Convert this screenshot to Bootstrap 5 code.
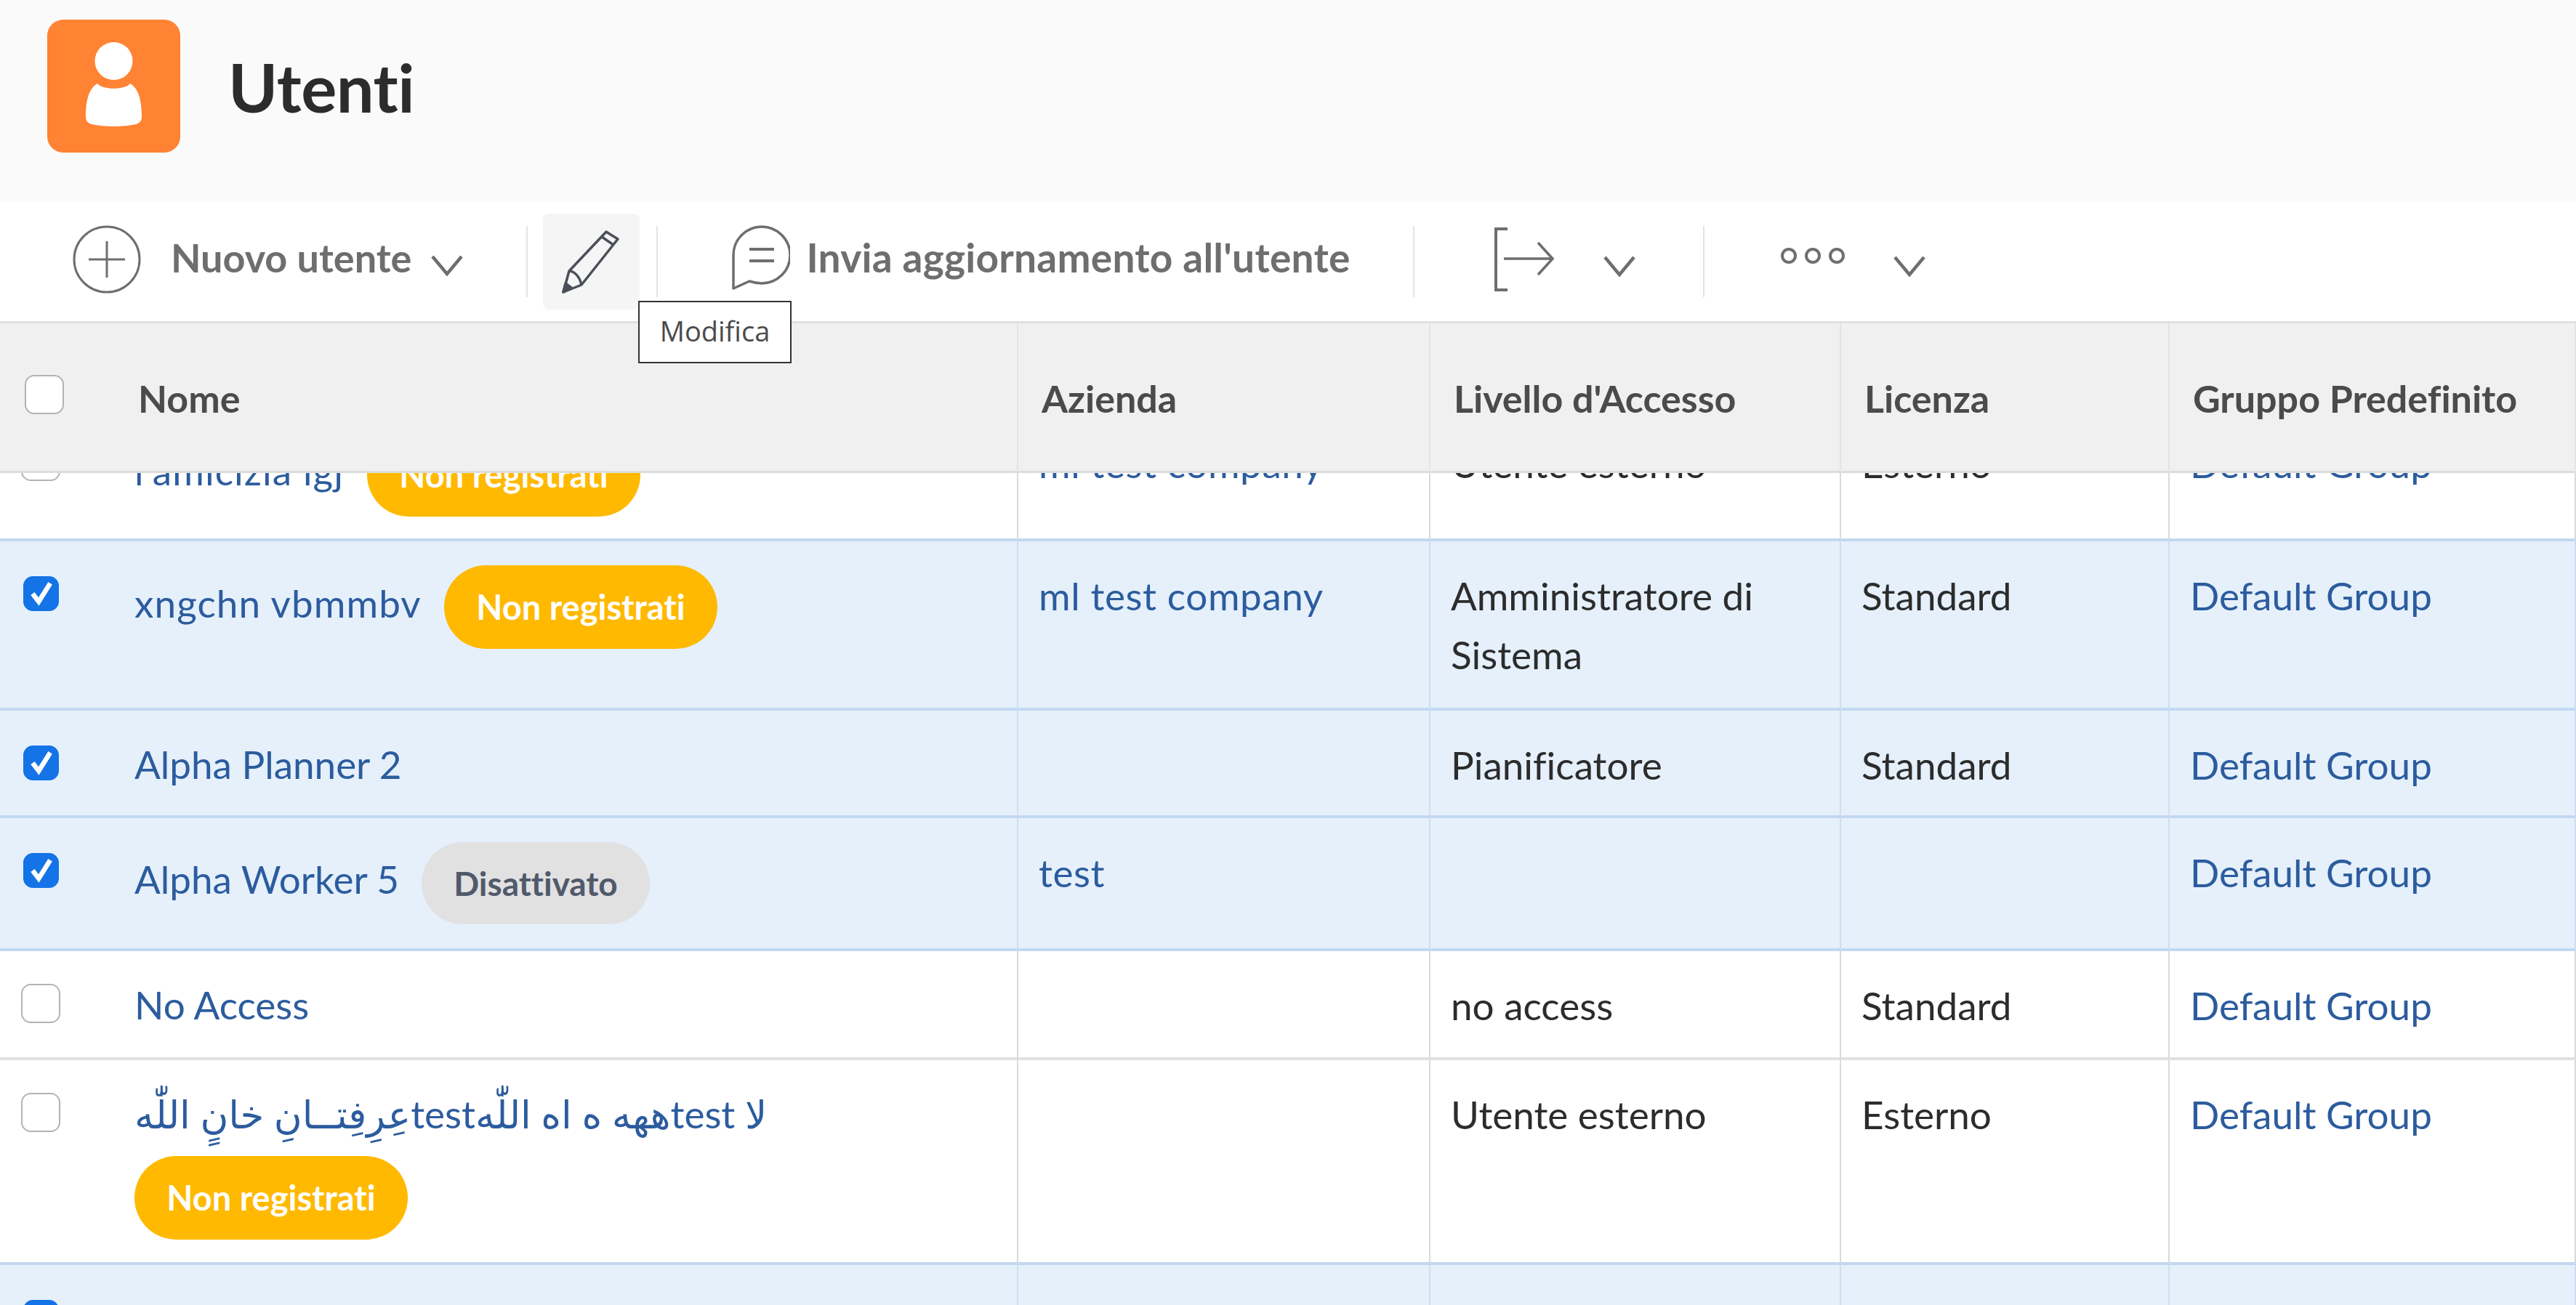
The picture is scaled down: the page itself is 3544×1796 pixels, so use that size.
<!DOCTYPE html>
<html lang="it">
<head>
<meta charset="utf-8"/>
<meta content="width=device-width, initial-scale=1.0" name="viewport"/>
<title>Utenti</title>
<link href="https://cdn.jsdelivr.net/npm/bootstrap@5.3.0/dist/css/bootstrap.min.css" rel="stylesheet"/>
<style>
  html, body { height: 100%; overflow: hidden; }
  body { font-family: Lato, "DejaVu Sans", sans-serif; font-size: 53px; color: #2c2c2c; background: #fff; font-variant-ligatures: none; }

  .page-head { height: 278px; background: #fafafa; padding: 27px 0 0 65px; gap: 66px; }
  .app-icon { width: 183px; height: 183px; }
  .page-head h1 { font-size: 92px; font-weight: 700; margin: 0 0 64px; color: #2c2c2c; letter-spacing: -.5px; }

  .tool-bar { height: 167px; border-bottom: 3px solid #e1e1e1; position: relative; color: #6e6e6e; font-weight: 700; font-size: 54px; }
  .tool-sep { width: 2px; height: 98px; background: #e4e4e4; flex: none; }
  .tool-sep.sep-1 { margin-left: 87px; }
  .tool-sep.sep-2 { margin-left: 23px; }
  .tool-sep.sep-3 { margin-left: 86px; }
  .tool-sep.sep-4 { margin-left: 93px; }
  .tool-add { margin-left: 100px; gap: 41px; }
  .tool-add svg { margin-bottom: 6px; }
  .tool-add span, .tool-send span { margin-bottom: 12px; }
  .tool-send span { font-size: 55px; letter-spacing: .25px; }
  .tool-chev { width: 44px; height: 30px; flex: none; }
  .chev-add { margin-left: 27px; margin-top: 10px; }
  .edit-box { width: 133px; height: 132px; background: #f5f5f5; border-radius: 8px; margin-left: 21px; }
  .tool-send { margin-left: 98px; gap: 22px; }
  .tool-send svg { margin-bottom: 8px; }
  .export-ico { margin-left: 108px; width: 84px; height: 90px; flex: none; margin-bottom: 6px; }
  .chev-export { margin-left: 68px; margin-top: 12px; }
  .more-ico { margin-left: 104px; width: 90px; height: 24px; flex: none; margin-bottom: 16px; }
  .chev-more { margin-left: 66px; margin-top: 12px; }
  .edit-tip { position: absolute; left: 878px; top: 136px; width: 211px; height: 86px; background: #fff; border: 2px solid #333; font-size: 38px; font-weight: 400; color: #4b4b4b; font-family: "Open Sans", sans-serif; z-index: 5; padding-bottom: 4px; }

  .grid-scroll { height: 1351px; overflow: hidden; }
  .user-grid { table-layout: fixed; width: 3544px; margin: 0; border-collapse: separate; border-spacing: 0; }
  .user-grid .w-check { width: 170px; }
  .user-grid .w-name { width: 1231px; }
  .user-grid .w-comp { width: 567px; }
  .user-grid .w-level { width: 565px; }
  .user-grid .w-lic { width: 452px; }
  .user-grid .w-group { width: 559px; }

  .user-grid th { position: sticky; top: 0; z-index: 3; height: 206px; background: #f0f0f0; color: #4b4b4b; font-weight: 700; font-size: 52px; vertical-align: middle; padding: 2px 0 0 32px; border-bottom: 3px solid #dcdcdc; border-right: 2px solid #e4e4e4; }
  .user-grid th.cell-check { padding: 16px 0 0 34px; border-right: 0; }
  .user-grid th.cell-name { padding-left: 20px; }
  .user-grid td { background: #fff; color: #2c2c2c; padding: 34px 0 0 28px; line-height: 81px; vertical-align: top; border-bottom: 4px solid #e1e1e1; border-right: 2px solid #dadada; box-shadow: none; }
  .user-grid td.cell-check { padding: 45px 0 0 29px; border-right: 0; line-height: 1; }
  .user-grid td.cell-name { padding: 33px 0 0 15px; }
  .user-grid tr.row-on td { background: #e5f0fb; border-bottom-color: #c2d8f0; border-right-color: #cbdff4; }
  .user-grid tr.row-on td.cell-check { padding: 48px 0 0 32px; }
  .user-grid tr.row-next td { border-bottom-color: #c2d8f0; }

  .h-182 { height: 182px; }
  .h-233 { height: 233px; }
  .h-148 { height: 148px; }
  .h-183 { height: 183px; }
  .h-150 { height: 150px; }
  .h-282 { height: 282px; }

  .pick { width: 54px; height: 54px; margin: 0; border: 2px solid #b3b3b3; border-radius: 10px; float: none; }
  .pick:checked[type=checkbox] { background-color: #1473e6; border-color: #1473e6; width: 49px; height: 48px; --bs-form-check-bg-image: url("data:image/svg+xml,%3csvg xmlns='http://www.w3.org/2000/svg' viewBox='0 0 20 20'%3e%3cpath fill='none' stroke='%23fff' stroke-width='3' d='M4.5 10l3.8 5L15.5 3.5'/%3e%3c/svg%3e"); }
  .user-grid a { color: #2c5c9e; text-decoration: none; }
  .name-line { min-height: 81px; }
  .name-text { flex: none; }
  .name-text.with-pill { margin-bottom: 12px; }
  .wide-text { letter-spacing: 1.1px; }
  .comp-text { letter-spacing: .6px; }
  .state-pill { display: inline-flex; align-items: center; justify-content: center; height: 115px; width: 376px; border-radius: 58px; background: #ffb900; color: #fff; font-weight: 700; font-size: 47px; flex: none; line-height: 1; }
  .state-pill.off { background: #e1e1e1; color: #505a6b; width: 314px; height: 113px; font-size: 46px; }
  .state-pill.own-line { display: flex; margin-top: 18px; }
  .rtl-name { direction: rtl; display: inline-block; font-size: 53px; font-variant-ligatures: normal; }
</style>
</head>
<body>

<header class="page-head d-flex align-items-start">
  <svg class="app-icon" viewBox="0 0 183 183">
    <rect width="183" height="183" rx="22" fill="#ff8333"/>
    <ellipse cx="91.5" cy="57" rx="26" ry="26" fill="#fff"/>
    <path d="M69 88c6 9 39 9 45 0 11 6 16 22 16 45 0 6-2 9-8 11-18 4-43 4-61 0-6-2-8-5-8-11 0-23 5-39 16-45z" fill="#fff"/>
  </svg>
  <h1 class="align-self-center">Utenti</h1>
</header>

<div class="tool-bar d-flex align-items-center">
  <div class="tool-add d-flex align-items-center">
    <svg width="94" height="94" viewBox="0 0 94 94" fill="none" stroke="#6e6e6e" stroke-width="3"><circle cx="47" cy="47" r="45"/><path d="M47 22v50M22 47h50"/></svg>
    <span>Nuovo utente</span>
  </div>
  <svg class="tool-chev chev-add" viewBox="0 0 44 30" fill="none" stroke="#6e6e6e" stroke-width="4.5"><path d="M2 3l20 24L42 3"/></svg>
  <div class="tool-sep sep-1"></div>
  <div class="edit-box d-flex align-items-center justify-content-center">
    <svg width="90" height="90" viewBox="0 0 84 90" fill="none" stroke="#4b4f58" stroke-width="3.5" stroke-linejoin="round"><path d="M3 87l8-29L62 4l16 10-50 63z"/><path d="M11 58c6 0 14 6 17 19M56 11l16 11"/><path d="M3 87l3-12 8 6z" fill="#4b4f58"/></svg>
  </div>
  <div class="tool-sep sep-2"></div>
  <div class="tool-send d-flex align-items-center">
    <svg width="84" height="94" viewBox="0 0 84 94" fill="none" stroke="#6e6e6e" stroke-width="3.5"><path d="M6 88V42a39 39 0 1 1 39 39c-6 0-11-1-17-3z" stroke-linejoin="round"/><path d="M28 34h34M28 50h34" stroke-width="4"/></svg>
    <span>Invia aggiornamento all'utente</span>
  </div>
  <div class="tool-sep sep-3"></div>
  <svg class="export-ico" viewBox="0 0 84 90" fill="none" stroke="#6e6e6e" stroke-width="4"><path d="M20 3H4v84h16"/><path d="M15 44h66M62 22l20 22-20 22" stroke-width="3.5"/></svg>
  <svg class="tool-chev chev-export" viewBox="0 0 44 30" fill="none" stroke="#6e6e6e" stroke-width="4.5"><path d="M2 3l20 24L42 3"/></svg>
  <div class="tool-sep sep-4"></div>
  <svg class="more-ico" viewBox="0 0 90 24" fill="none" stroke="#6e6e6e" stroke-width="4"><circle cx="12" cy="12" r="9"/><circle cx="45" cy="12" r="9"/><circle cx="78" cy="12" r="9"/></svg>
  <svg class="tool-chev chev-more" viewBox="0 0 44 30" fill="none" stroke="#6e6e6e" stroke-width="4.5"><path d="M2 3l20 24L42 3"/></svg>
  <div class="edit-tip d-flex align-items-center justify-content-center">Modifica</div>
</div>

<div class="grid-scroll" id="gridScroll">
  <table class="table user-grid">
    <thead>
      <tr>
        <th class="cell-check w-check"><input class="form-check-input pick" type="checkbox"/></th>
        <th class="cell-name w-name">Nome</th>
        <th class="w-comp">Azienda</th>
        <th class="w-level">Livello d'Accesso</th>
        <th class="w-lic">Licenza</th>
        <th class="w-group">Gruppo Predefinito</th>
      </tr>
    </thead>
    <tbody id="gridBody"></tbody>
  </table>
</div>

<script src="https://cdn.jsdelivr.net/npm/bootstrap@5.3.0/dist/js/bootstrap.bundle.min.js"></script>
<script>
const users = [
  { name: "l'amicizia lgj", nameW: 320, wide: true, pill: 'new', comp: 'ml test company', level: 'Utente esterno', lic: 'Esterno', h: 'h-182', next: true },
  { name: 'xngchn vbmmbv', nameW: 426, wide: true, pill: 'new', comp: 'ml test company', level: 'Amministratore di<br>Sistema', lic: 'Standard', h: 'h-233', on: true },
  { name: 'Alpha Planner 2', comp: '', level: 'Pianificatore', lic: 'Standard', h: 'h-148', on: true },
  { name: 'Alpha Worker 5', nameW: 395, pill: 'off', comp: 'test', level: '', lic: '', h: 'h-183', on: true },
  { name: 'No Access', comp: '', level: 'no access', lic: 'Standard', h: 'h-150' },
  { rtl: 'لا testههه ه اه اللّٰهtestعِرِفِتــانِ خانٍ اللّٰه', pill: 'wrap', comp: '', level: 'Utente esterno', lic: 'Esterno', h: 'h-282', next: true },
  { name: 'Alpha Planner 1', comp: '', level: 'Pianificatore', lic: 'Standard', h: 'h-148', on: true }
];

function pillHtml(kind) {
  if (kind === 'off') return '<span class="state-pill off">Disattivato</span>';
  if (kind === 'wrap') return '<span class="state-pill own-line">Non registrati</span>';
  return '<span class="state-pill">Non registrati</span>';
}

const rows = users.map(u => {
  let nameCell;
  if (u.rtl) {
    nameCell = `<a class="rtl-name" href="#">${u.rtl}</a>${pillHtml(u.pill)}`;
  } else {
    const w = u.nameW ? `style="width:${u.nameW}px"` : '';
    nameCell = `<div class="name-line d-flex align-items-center"><a class="name-text ${u.pill ? 'with-pill' : ''} ${u.wide ? 'wide-text' : ''}" ${w} href="#">${u.name}</a>${u.pill ? pillHtml(u.pill) : ''}</div>`;
  }
  return `<tr class="${u.h} ${u.on ? 'row-on' : ''} ${u.next ? 'row-next' : ''}">
    <td class="cell-check"><input class="form-check-input pick" type="checkbox" ${u.on ? 'checked' : ''}/></td>
    <td class="cell-name">${nameCell}</td>
    <td><a class="comp-text" href="#">${u.comp}</a></td>
    <td>${u.level}</td>
    <td>${u.lic}</td>
    <td><a href="#">Default Group</a></td>
  </tr>`;
});
document.getElementById('gridBody').innerHTML = rows.join('');

// the list is scrolled a bit under the fixed header
document.getElementById('gridScroll').scrollTop = 88;
</script>
</body>
</html>
